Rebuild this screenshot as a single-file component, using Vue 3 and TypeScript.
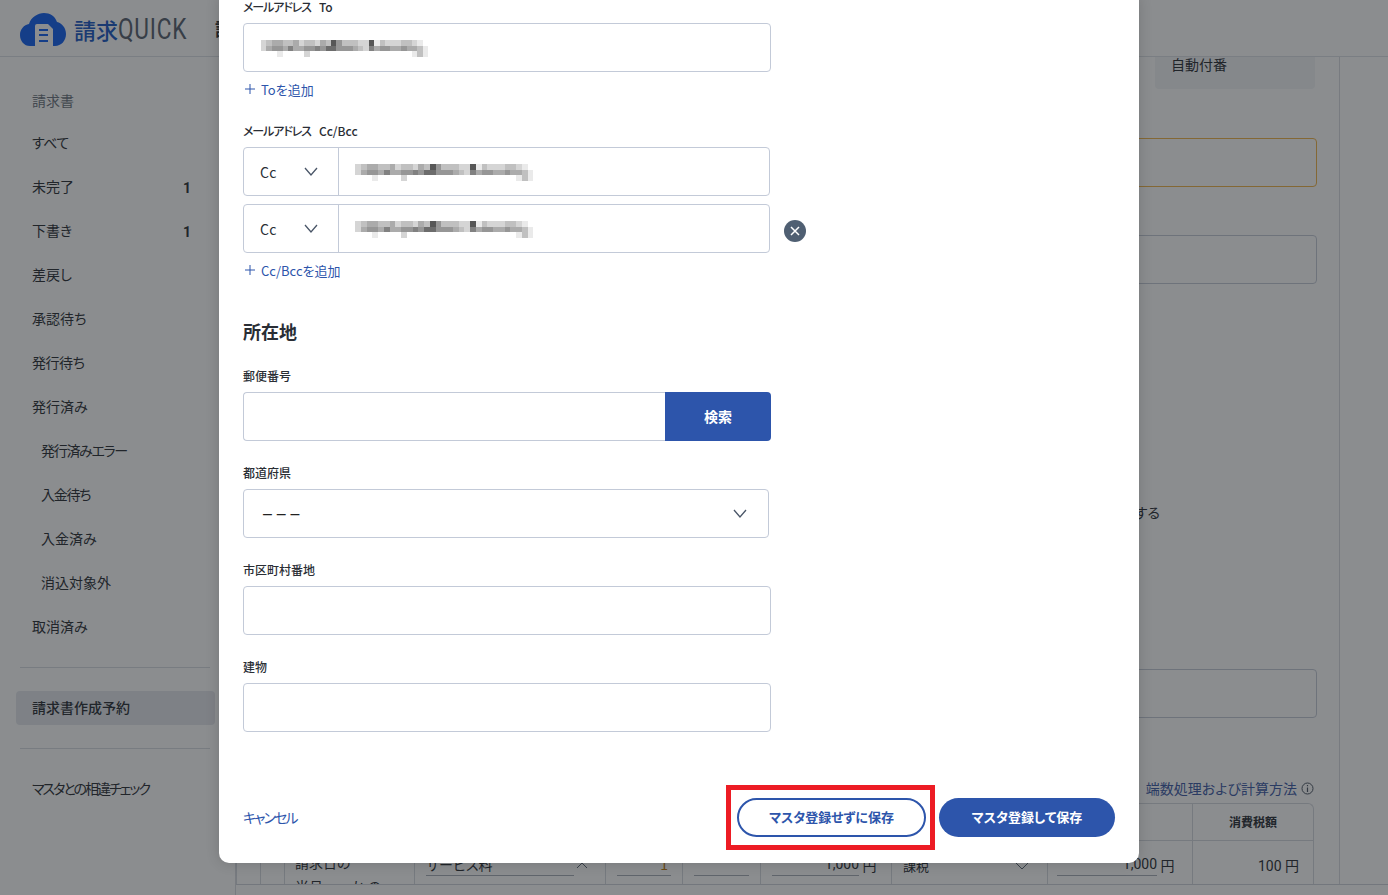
<script setup lang="ts">
interface NavItem { label: string; count?: number; sub?: boolean; tight?: boolean }

const navItems: NavItem[] = [
  { label: 'すべて', tight: true },
  { label: '未完了', count: 1 },
  { label: '下書き', count: 1 },
  { label: '差戻し' },
  { label: '承認待ち' },
  { label: '発行待ち', tight: true },
  { label: '発行済み' },
  { label: '発行済みエラー', sub: true, tight: true },
  { label: '入金待ち', sub: true, tight: true },
  { label: '入金済み', sub: true },
  { label: '消込対象外', sub: true },
  { label: '取消済み' },
]

const mosaicRows = [
  '234433423324385333228132223321000',
  '245546445565775554326455445443100',
  '000100002000000000000000000013100',
]
const mosaicCells: string[] = mosaicRows.flatMap((row) =>
  row.split('').map((d) => {
    const level = 255 - Number(d) * 21
    return `rgb(${level},${level},${level})`
  }),
)
</script>

<template>
  <div class="page">
    <header class="topbar">
      <div class="brand">
        <svg class="cloud" width="46" height="33" viewBox="0 0 46 33" aria-hidden="true">
          <path d="M10 33C4 33 0 28 0 22C0 16 4 12 9 11C11 4 18 0 24 0C30 0 35 3 37 9C42 10 46 15 46 21C46 28 41 33 35 33Z" fill="#1260f0" />
          <path d="M15 33V13Q15 11 17 11H28L33 16V33Z" fill="#fff" />
          <path d="M19 17H28M19 22H28M19 28H28" stroke="#1260f0" stroke-width="2.2" fill="none" />
        </svg>
        <span class="brand-ja">請求</span><span class="brand-en">QUICK</span>
      </div>
      <span class="page-title">請求書作成予約</span>
    </header>

    <div class="body">
      <aside class="sidebar">
        <div class="nav-title">請求書</div>
        <nav class="nav-list">
          <div v-for="item in navItems" :key="item.label" class="nav-item" :class="{ sub: item.sub, tight: item.tight }">
            <span>{{ item.label }}</span>
            <b v-if="item.count" class="count">{{ item.count }}</b>
          </div>
        </nav>
        <hr class="side-rule first" />
        <div class="nav-selected">請求書作成予約</div>
        <hr class="side-rule second" />
        <div class="nav-item check">マスタとの相違チェック</div>
      </aside>

      <main class="main">
        <div class="content">
          <div class="auto-number">自動付番</div>
          <div class="bg-input warn"></div>
          <div class="bg-input second"></div>
          <div class="radio-text">する</div>
          <div class="bg-input third"></div>
          <div class="calc-link">
            <span>端数処理および計算方法</span>
            <svg width="13" height="13" viewBox="0 0 13 13" aria-hidden="true">
              <circle cx="6.5" cy="6.5" r="5.5" fill="none" stroke="#4b5563" />
              <path d="M6.5 5.6V10M6.5 3V4.2" stroke="#4b5563" stroke-width="1.2" />
            </svg>
          </div>
          <div class="table">
            <div class="th"></div>
            <div class="th"></div>
            <div class="th"></div>
            <div class="th"></div>
            <div class="th"></div>
            <div class="th"></div>
            <div class="th"></div>
            <div class="th"></div>
            <div class="th"></div>
            <div class="th strong">消費税額</div>

            <div class="td"></div>
            <div class="td"></div>
            <div class="td date">請求日の<br />当月　　か の</div>
            <div class="td">
              <span class="line wide">サービス料</span>
              <svg class="mini-up" width="12" height="7" viewBox="0 0 12 7"><path d="M1 6L6 1L11 6" fill="none" stroke="#5b6675" /></svg>
            </div>
            <div class="td"><span class="line qty">1</span></div>
            <div class="td"><span class="line blank"></span></div>
            <div class="td money"><span class="line price">1,000</span>&nbsp;円</div>
            <div class="td tax">
              <span>課税</span>
              <svg width="14" height="8" viewBox="0 0 14 8"><path d="M1 1L7 7L13 1" fill="none" stroke="#5b6675" /></svg>
            </div>
            <div class="td money two"><span class="line price2">1,000</span>&nbsp;円</div>
            <div class="td money end">100 円</div>
          </div>
        </div>
      </main>
    </div>
    <div class="bottom-bar"></div>

    <div class="overlay">
      <section class="modal">
        <div class="field first">
          <label class="label"><span class="kana">メールアドレス</span><span class="latin">To</span></label>
          <div class="control full">
            <div class="mosaic">
              <i v-for="(c, i) in mosaicCells" :key="i" :style="{ background: c }"></i>
            </div>
          </div>
        </div>
        <a class="add">
          <svg width="10" height="10" viewBox="0 0 10 10"><path d="M5 0V10M0 5H10" stroke="#2d55ab" /></svg>
          Toを追加
        </a>

        <div class="field cc-field">
          <label class="label"><span class="kana">メールアドレス</span><span class="latin">Cc/Bcc</span></label>
          <div class="cc-row">
            <div class="cc-kind">
              <span>Cc</span>
              <svg width="14" height="9" viewBox="0 0 14 9"><path d="M1 1L7 8L13 1" fill="none" stroke="#4a5668" stroke-width="1.3" /></svg>
            </div>
            <div class="cc-value">
              <div class="mosaic">
                <i v-for="(c, i) in mosaicCells" :key="i" :style="{ background: c }"></i>
              </div>
            </div>
          </div>
          <div class="cc-row next">
            <div class="cc-kind">
              <span>Cc</span>
              <svg width="14" height="9" viewBox="0 0 14 9"><path d="M1 1L7 8L13 1" fill="none" stroke="#4a5668" stroke-width="1.3" /></svg>
            </div>
            <div class="cc-value">
              <div class="mosaic">
                <i v-for="(c, i) in mosaicCells" :key="i" :style="{ background: c }"></i>
              </div>
            </div>
            <button class="remove" aria-label="削除">
              <svg width="10" height="10" viewBox="0 0 10 10"><path d="M1 1L9 9M9 1L1 9" stroke="#fff" stroke-width="1.5" /></svg>
            </button>
          </div>
        </div>
        <a class="add">
          <svg width="10" height="10" viewBox="0 0 10 10"><path d="M5 0V10M0 5H10" stroke="#2d55ab" /></svg>
          Cc/Bccを追加
        </a>

        <h2 class="section-title">所在地</h2>

        <div class="field">
          <label class="label">郵便番号</label>
          <div class="zip">
            <div class="zip-input"></div>
            <button class="zip-btn">検索</button>
          </div>
        </div>
        <div class="field">
          <label class="label">都道府県</label>
          <div class="control select">
            <span class="dashes">– – –</span>
            <svg width="14" height="9" viewBox="0 0 14 9"><path d="M1 1L7 8L13 1" fill="none" stroke="#4a5668" stroke-width="1.3" /></svg>
          </div>
        </div>
        <div class="field">
          <label class="label">市区町村番地</label>
          <div class="control full"></div>
        </div>
        <div class="field">
          <label class="label">建物</label>
          <div class="control full"></div>
        </div>

        <footer class="modal-footer">
          <a class="cancel">キャンセル</a>
          <div class="actions">
            <div class="highlighted">
              <button class="btn outline">マスタ登録せずに保存</button>
              <span class="red-frame"></span>
            </div>
            <button class="btn solid">マスタ登録して保存</button>
          </div>
        </footer>
      </section>
    </div>
  </div>
</template>

<style scoped>
.page {
  position: relative;
  width: 1388px;
  height: 895px;
  overflow: hidden;
  background: #fff;
  color: #2a2e35;
  font-family: "Noto Sans CJK JP", "Noto Sans", sans-serif;
  font-size: 14px;
  font-feature-settings: "palt";
  display: flex;
  flex-direction: column;
}

/* header */
.topbar {
  height: 56px;
  flex: none;
  border-bottom: 1px solid #dde0e6;
  display: flex;
  align-items: center;
}
.brand {
  display: flex;
  align-items: center;
  padding-left: 20px;
  width: 195px;
  flex: none;
}
.cloud { margin-top: 3px; }
.brand-ja {
  margin-left: 8px;
  font-size: 22px;
  font-weight: 500;
  color: #1a58c4;
  line-height: 30px;
  margin-top: 2px;
}
.brand-en {
  font-family: "Roboto", sans-serif;
  font-size: 29px;
  color: #56606e;
  display: inline-block;
  transform: scaleX(0.78);
  transform-origin: left center;
  line-height: 30px;
  margin-top: 2px;
  letter-spacing: 1px;
}
.page-title { font-size: 18px; font-weight: 700; white-space: nowrap; }

/* layout */
.body { flex: 1; display: flex; min-height: 0; }
.sidebar {
  width: 236px;
  flex: none;
  box-sizing: border-box;
  padding-top: 32px;
  border-right: 1px solid #d8dbe1;
  position: relative;
}
.nav-title { height: 24px; line-height: 22px; padding-left: 32px; color: #6c7480; }
.nav-list { margin-top: 8px; }
.nav-item {
  height: 44px;
  display: flex;
  align-items: center;
  padding: 0 0 2px 32px;
  width: 191px;
  box-sizing: border-box;
  justify-content: space-between;
}
.nav-item.sub { padding-left: 41px; }
.nav-item.tight > span { letter-spacing: -0.5px; }
.nav-item.sub.tight > span { letter-spacing: -1.3px; }
.count { font-weight: 700; font-size: 14px; font-family: "Roboto", sans-serif; margin-top: 3px; }
.side-rule { border: 0; border-top: 1px solid #d9dce2; margin: 0 25px 0 20px; }
.side-rule.first { margin-top: 18px; }
.side-rule.second { margin-top: 23px; }
.nav-selected {
  margin: 23px 0 0 16px;
  width: 199px;
  height: 34px;
  box-sizing: border-box;
  padding-left: 16px;
  line-height: 32px;
  background: #e4e7ed;
  border-radius: 4px;
  font-weight: 500;
  font-feature-settings: normal;
}
.nav-item.check { margin-top: 18px; width: 200px; white-space: nowrap; letter-spacing: -2px; }

/* background main */
.main { flex: 1; min-width: 0; display: flex; }
.content {
  width: 1104px;
  flex: none;
  box-sizing: border-box;
  border-right: 1px solid #d8dbe1;
  padding-right: 22px;
  display: flex;
  flex-direction: column;
  align-items: flex-end;
  overflow: hidden;
  height: 827px;
}
.auto-number {
  width: 160px;
  height: 32px;
  flex: none;
  box-sizing: border-box;
  margin-right: 2px;
  padding-left: 16px;
  line-height: 15px;
  background: #f3f4f7;
  border-radius: 0 0 4px 4px;
}
.bg-input {
  width: 1056px;
  height: 49px;
  box-sizing: border-box;
  border: 1px solid #c5cad6;
  border-radius: 4px;
  flex: none;
}
.bg-input.warn { margin-top: 49px; border-color: #f0b44a; }
.bg-input.second { margin-top: 48px; }
.radio-text { margin-top: 218px; margin-right: 157px; line-height: 20px; flex: none; }
.bg-input.third { margin-top: 147px; }
.calc-link {
  margin-top: 60px;
  margin-right: 3px;
  display: flex;
  align-items: center;
  gap: 4px;
  color: #3c5aa6;
  height: 20px;
  flex: none;
}
.table {
  margin-top: 5px;
  width: 1077px;
  margin-right: 3px;
  flex: none;
  display: grid;
  grid-template-columns: 24px 24px 130px 191px 77px 78px 131px 156px 145px 121px;
  grid-template-rows: 37px 60px;
  border-top: 1px solid #d5d8df;
  border-right: 1px solid #d5d8df;
  border-radius: 0 6px 0 0;
}
.th {
  border-left: 1px solid #d5d8df;
  border-bottom: 1px solid #d5d8df;
  box-sizing: border-box;
}
.th.strong {
  font-size: 12px;
  font-weight: 700;
  text-align: center;
  line-height: 36px;
}
.td {
  border-left: 1px solid #d5d8df;
  box-sizing: border-box;
  display: flex;
  align-items: flex-start;
  padding: 15px 11px 0;
  line-height: 20px;
  white-space: nowrap;
}
.td.date { display: block; padding: 9px 0 0 10px; line-height: 24px; }
.line {
  display: inline-block;
  height: 20px;
  box-sizing: border-box;
  border-bottom: 1px solid #a8aeb9;
  line-height: 17px;
}
.line.wide { width: 148px; }
.line.qty { width: 55px; text-align: right; padding-right: 3px; color: #c07a10; }
.line.blank { width: 55px; }
.line.price { width: 87px; text-align: right; }
.line.price2 { width: 100px; text-align: right; }
.td .mini-up { margin: 6px 0 0 2px; flex: none; }
.td.tax { justify-content: space-between; padding-right: 18px; font-size: 13px; }
.td.tax svg { margin-top: 6px; }
.td.money { font-family: "Roboto", "Noto Sans CJK JP", sans-serif; }
.td.money.two { padding-left: 9px; }
.td.money.end { justify-content: flex-end; padding-right: 14px; }
.bottom-bar {
  position: absolute;
  left: 236px;
  right: 0;
  top: 884px;
  height: 11px;
  background: #fff;
  border-top: 1px solid #cfd3da;
}

/* overlay + modal */
.overlay {
  position: absolute;
  inset: 0;
  background: rgba(24, 28, 32, 0.5);
  padding-left: 219px;
}
.modal {
  width: 920px;
  box-sizing: border-box;
  background: #fff;
  border-radius: 0 0 10px 10px;
  padding: 0 24px 26px;
  box-shadow: 0 0 14px rgba(0, 0, 0, 0.16);
  color: #2a2e35;
}
.field { margin-top: 22px; }
.field.first { margin-top: -3px; }
.field.cc-field { margin-top: 21px; }
.label {
  display: block;
  height: 20px;
  line-height: 20px;
  font-size: 12px;
  font-weight: 500;
  margin-bottom: 6px;
}
.kana { letter-spacing: -1.1px; }
.latin { margin-left: 8px; }
.control {
  height: 49px;
  box-sizing: border-box;
  border: 1px solid #c3cad8;
  border-radius: 4px;
  display: flex;
  align-items: center;
}
.control.full { width: 528px; padding-left: 17px; }
.control.select {
  width: 526px;
  padding: 0 21px 0 19px;
  justify-content: space-between;
}
.dashes { font-family: "Liberation Sans", sans-serif; font-size: 16px; letter-spacing: 0.2px; color: #222; }
.mosaic {
  display: grid;
  grid-template-columns: repeat(33, 5.4px);
  grid-auto-rows: 5.5px;
  flex: none;
  margin-top: 2px;
}
.mosaic i { display: block; }
.cc-value .mosaic { grid-template-columns: repeat(33, 5.75px); }
.add {
  display: flex;
  align-items: center;
  gap: 6px;
  height: 20px;
  margin-top: 8px;
  padding: 0 0 2px 2px;
  box-sizing: border-box;
  font-size: 13px;
  color: #2d55ab;
}
.cc-row {
  display: flex;
  height: 49px;
  width: 527px;
  position: relative;
  box-sizing: border-box;
  border: 1px solid #c3cad8;
  border-radius: 4px;
}
.cc-row.next { margin-top: 8px; }
.cc-kind {
  width: 95px;
  flex: none;
  box-sizing: border-box;
  border-right: 1px solid #c3cad8;
  display: flex;
  align-items: center;
  justify-content: space-between;
  padding: 0 20px 0 16px;
  letter-spacing: 0.2px;
}
.cc-value { flex: 1; display: flex; align-items: center; padding-left: 16px; }
.remove {
  position: absolute;
  left: 540px;
  top: 15px;
  width: 22px;
  height: 22px;
  border: 0;
  padding: 0;
  border-radius: 50%;
  background: #4f5f72;
  display: flex;
  align-items: center;
  justify-content: center;
}
.section-title {
  margin: 39px 0 0;
  height: 24px;
  line-height: 22px;
  font-size: 18px;
  font-weight: 700;
}
.zip { display: flex; width: 528px; height: 49px; }
.zip-input {
  flex: 1;
  box-sizing: border-box;
  border: 1px solid #c3cad8;
  border-right: 0;
  border-radius: 4px 0 0 4px;
}
.zip-btn {
  width: 106px;
  border: 0;
  background: #2d55ab;
  color: #fff;
  font: inherit;
  font-size: 14px;
  font-weight: 700;
  border-radius: 0 4px 4px 0;
  padding: 0 0 2px;
}
.modal-footer {
  margin-top: 66px;
  display: flex;
  justify-content: space-between;
  align-items: center;
}
.cancel { color: #2d55ab; letter-spacing: -2px; padding-bottom: 2px; }
.actions { display: flex; gap: 13px; }
.highlighted { position: relative; display: flex; }
.red-frame {
  position: absolute;
  left: -11px;
  right: -9px;
  top: -13px;
  bottom: -13px;
  border: 5px solid #ed1c24;
  pointer-events: none;
}
.btn {
  height: 39px;
  box-sizing: border-box;
  border-radius: 20px;
  font: inherit;
  font-size: 13px;
  font-weight: 700;
  padding: 0 0 2px;
}
.btn.outline { width: 189px; border: 2px solid #2d55ab; background: #fff; color: #2d55ab; }
.btn.solid { width: 176px; border: 0; background: #2d55ab; color: #fff; }
</style>
